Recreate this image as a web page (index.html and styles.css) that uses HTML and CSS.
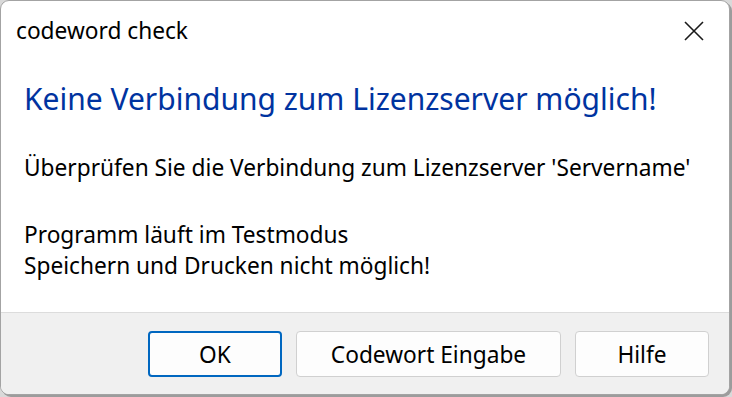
FILE: index.html
```html
<!DOCTYPE html>
<html lang="de">
<head>
<meta charset="utf-8">
<title>codeword check</title>
<link rel="stylesheet" href="styles.css">
</head>
<body>
<div class="window">
  <div class="titlebar">
    <span class="title">codeword check</span>
    <button class="close" aria-label="Schließen">
      <svg width="20" height="20" viewBox="0 0 20 20"><path d="M1 1 L19 19 M19 1 L1 19" stroke="#1a1a1a" stroke-width="1.6" fill="none"/></svg>
    </button>
  </div>
  <div class="content">
    <h1 class="instruction">Keine Verbindung zum Lizenzserver möglich!</h1>
    <p class="msg msg-first">Überprüfen Sie die Verbindung zum Lizenzserver 'Servername'</p>
    <p class="msg">Programm läuft im Testmodus<br>Speichern und Drucken nicht möglich!</p>
  </div>
  <div class="footer">
    <button class="btn btn-default">OK</button>
    <button class="btn btn-wide">Codewort Eingabe</button>
    <button class="btn">Hilfe</button>
  </div>
</div>
</body>
</html>
```

FILE: styles.css
```css
html, body {
  margin: 0;
  padding: 0;
}
body {
  width: 732px;
  height: 397px;
  background: #d9d9d9;
  font-family: "Noto Sans", "Open Sans", sans-serif;
  overflow: hidden;
}
.window {
  box-sizing: border-box;
  width: 730px;
  height: 395px;
  border: 1px solid #a3a3a3;
  border-radius: 9px;
  background: #ffffff;
  box-shadow: 2px 2px 0 #9c9c9c;
  display: flex;
  flex-direction: column;
  overflow: hidden;
}
.titlebar {
  height: 62px;
  flex: none;
  display: flex;
  align-items: center;
  justify-content: space-between;
  padding-left: 15px;
  padding-right: 14px;
}
.title {
  font-size: 22.7px;
  color: #000;
  margin-top: -3px;
}
.close {
  border: 0;
  background: transparent;
  padding: 0;
  width: 22px;
  height: 22px;
  display: flex;
  align-items: center;
  justify-content: center;
  margin-right: 10px;
  margin-top: -2px;
}
.content {
  flex: 1;
  padding: 16px 23px 0 23px;
}
.instruction {
  margin: 0;
  font-weight: normal;
  font-size: 30px;
  line-height: 40px;
  color: #0033a0;
}
.msg {
  margin: 36px 0 0 0;
  font-size: 22.7px;
  line-height: 31px;
  color: #000;
}
.msg-first {
  margin-top: 33px;
}
.footer {
  flex: none;
  height: 82px;
  box-sizing: border-box;
  border-top: 1px solid #dcdcdc;
  background: #f0f0f0;
  display: flex;
  justify-content: flex-end;
  align-items: flex-start;
  gap: 14px;
  padding-top: 18px;
  padding-right: 20px;
}
.btn {
  box-sizing: border-box;
  height: 46px;
  width: 134px;
  padding: 0;
  border: 1px solid #d0d0d0;
  border-radius: 4px;
  background: #fdfdfd;
  font-family: inherit;
  font-size: 22.7px;
  color: #000;
}
.btn-wide {
  width: 265px;
}
.btn-default {
  border: 2px solid #0067c0;
}
```
